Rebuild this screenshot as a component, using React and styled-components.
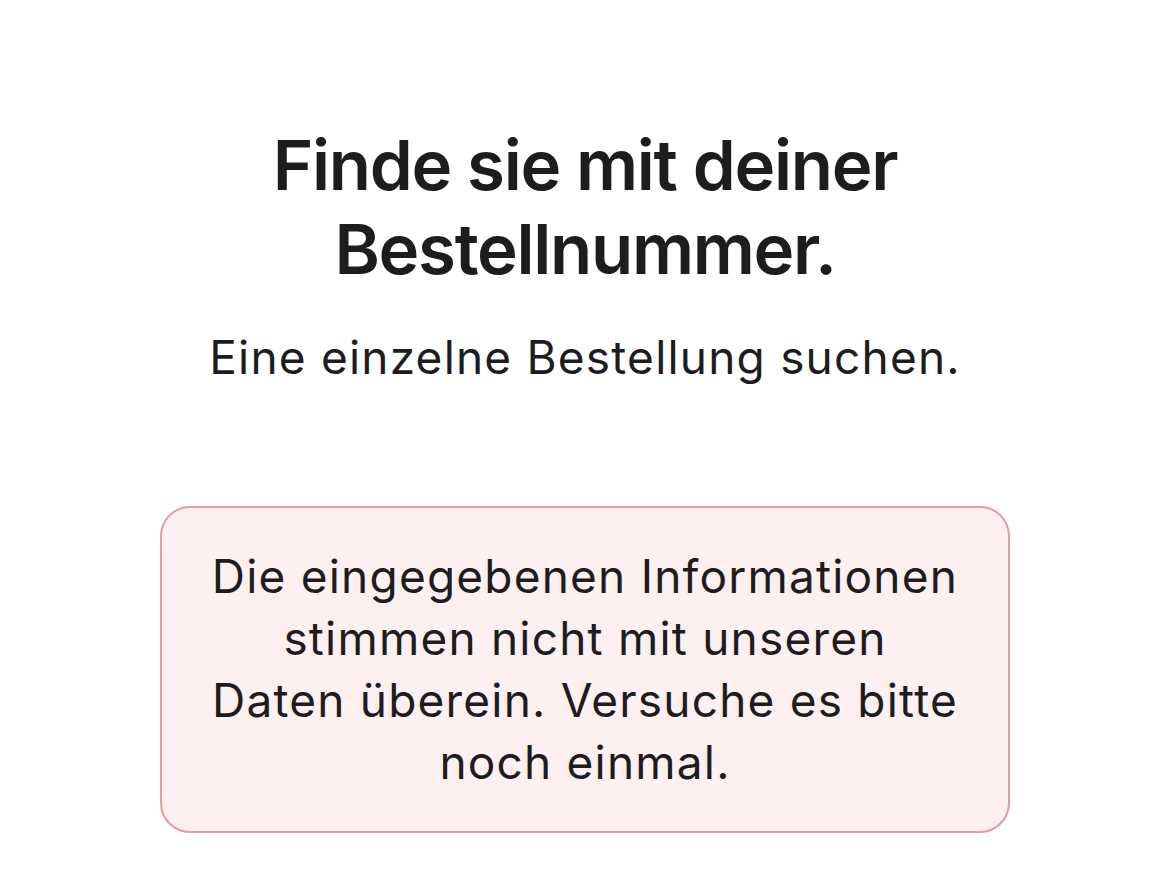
import React from "react";
import styled, { createGlobalStyle } from "styled-components";

const Global = createGlobalStyle`
  body {
    margin: 0;
    background: #fff;
    font-family: Inter, "Noto Sans", sans-serif;
    color: #1d1d1f;
  }
`;

const Page = styled.div`
  display: flex;
  flex-direction: column;
  align-items: center;
  padding-top: 123px;
`;

const Title = styled.h1`
  margin: 0;
  font-size: 69px;
  line-height: 84px;
  font-weight: 600;
  letter-spacing: -1.3px;
  text-align: center;
  width: 700px;
`;

const Subtitle = styled.p`
  margin: 38px 0 0;
  font-size: 46px;
  line-height: 56px;
  font-weight: 400;
  letter-spacing: 1.2px;
  text-align: center;
`;

const ErrorBox = styled.div`
  box-sizing: border-box;
  margin-top: 121px;
  width: 850px;
  padding: 37px 30px 38px;
  border: 2px solid #e39ca0;
  border-radius: 30px;
  background: #fef0f1;
  font-size: 46px;
  line-height: 62px;
  letter-spacing: 1.2px;
  text-align: center;
`;

export default function App() {
  return (
    <>
      <Global />
      <Page>
        <Title>Finde sie mit deiner Bestellnummer.</Title>
        <Subtitle>Eine einzelne Bestellung suchen.</Subtitle>
        <ErrorBox>
          Die eingegebenen Informationen
          <br />
          stimmen nicht mit unseren
          <br />
          Daten überein. Versuche es bitte
          <br />
          noch einmal.
        </ErrorBox>
      </Page>
    </>
  );
}
